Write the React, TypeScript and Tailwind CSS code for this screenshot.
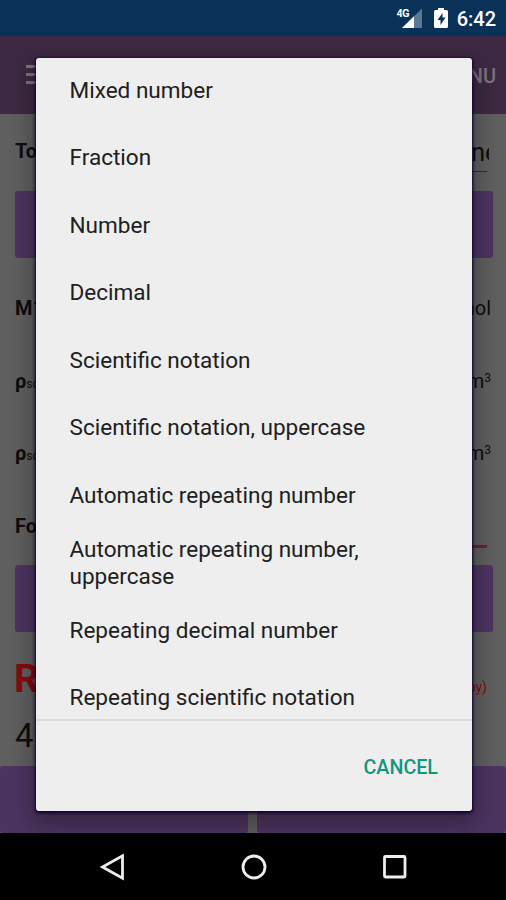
const formats = [
  'Mixed number',
  'Fraction',
  'Number',
  'Decimal',
  'Scientific notation',
  'Scientific notation, uppercase',
  'Automatic repeating number',
  'Automatic repeating number, uppercase',
  'Repeating decimal number',
  'Repeating scientific notation',
];

function StatusBar() {
  return (
    <header className="flex h-9 shrink-0 items-center justify-end bg-[#0a3158] pr-[10px] text-white">
      <svg className="h-6 w-[28px]" viewBox="0 0 28 24">
        <path d="M26 2.500V22H6Z" fill="#5b7894" />
        <path d="M18 10.300V22H6Z" fill="#fff" />
        <text x="0.500" y="11" fontSize="11" fontWeight="700" fill="#fff" stroke="#0a3158" strokeWidth="2" paintOrder="stroke" textLength="13">4G</text>
      </svg>
      <svg className="ml-[10px] h-6 w-[14px]" viewBox="0 0 14 24">
        <path d="M4 2h6v2h2.500q1.500 0 1.500 1.500v15q0 1.500-1.500 1.500h-11Q0 22 0 20.500v-15Q0 4 1.500 4H4Z" fill="#fff" />
        <path d="M8.500 7L3.500 14h3v5l5-7.500h-3Z" fill="#0a3158" />
      </svg>
      <span className="mt-[2px] ml-[9px] text-[20px] leading-9 font-medium">6:42</span>
    </header>
  );
}

function AppBar() {
  return (
    <div className="flex h-[78px] shrink-0 items-center justify-between bg-[#3d2942] pr-[10px] pl-[26px] text-[#7c7480]">
      <div className="-mt-[2px] flex w-6 flex-col gap-[5px]">
        <span className="h-[3px] bg-current" />
        <span className="h-[3px] bg-current" />
        <span className="h-[3px] bg-current" />
      </div>
      <span className="mt-[2px] text-[20px] font-medium">MENU</span>
    </div>
  );
}

function Field({ label, sub, unit, sup }: { label: string; sub?: string; unit: string; sup?: string }) {
  return (
    <div className="flex h-[72.500px] items-center justify-between px-[15px] text-[20px] text-[#0d0d0d]">
      <span className="font-bold">
        {label}
        {sub && <span className="text-[12px] font-normal">{sub}</span>}
      </span>
      <span>
        {unit}
        {sup && <span className="relative -top-[6px] text-[12px]">{sup}</span>}
      </span>
    </div>
  );
}

function Calculator() {
  return (
    <main className="flex h-[719px] flex-col overflow-hidden bg-[#5f5f5f] text-[#0d0d0d]">
      <div className="flex h-[77px] shrink-0 items-center justify-between pr-[17px] pl-[15px]">
        <span className="-mt-[3px] text-[20px] font-bold">To</span>
        <div className="h-[36px] w-[60px]">
          <div className="h-full overflow-hidden pl-[28px] text-[25px] leading-[36px]">one</div>
          <div className="mr-[2px] h-px bg-[#303030]" />
        </div>
      </div>
      <div className="mr-[13px] ml-[15px] h-[67px] shrink-0 rounded-[3px] bg-[#4c3460]" />
      <div className="mt-[14px] shrink-0">
        <Field label="M1" unit="g/mol" />
        <Field label="ρ" sub="solution" unit="g/cm" sup="3" />
        <Field label="ρ" sub="solute" unit="g/cm" sup="3" />
      </div>
      <div className="flex h-[75px] shrink-0 items-center justify-between pr-[19px] pl-[15px]">
        <span className="-mt-[2px] text-[20px] font-bold">Fo</span>
        <span className="mt-[38px] h-[3px] w-[60px] bg-[#6d2038]" />
      </div>
      <div className="mr-[13px] ml-[15px] h-[67px] shrink-0 rounded-[3px] bg-[#4c3460]" />
      <div className="flex h-[90px] shrink-0 items-center justify-between pr-[19px] pl-[14px] text-[#850a0f]">
        <span className="mt-[5px] text-[39px] font-bold">R</span>
        <span className="mt-[21px] text-[14px]">(by)</span>
      </div>
      <span className="pl-[15px] text-[33px] leading-[28px]">4</span>
      <div className="mt-auto flex h-[67px] shrink-0 gap-[9px]">
        <div className="w-[248px] rounded-[3px] bg-[#4c3460]" />
        <div className="flex-1 rounded-[3px] bg-[#4c3460]" />
      </div>
    </main>
  );
}

function FormatDialog() {
  return (
    <div className="absolute top-[58px] left-[36px] flex h-[753px] w-[436px] flex-col overflow-hidden rounded-[3px] bg-[#eeeeee] shadow-[0_1px_3px_1px_#0c0030,0_10px_22px_4px_#00000050]">
      <ul className="h-[661px] shrink-0 overflow-hidden">
        {formats.map((format, index) => (
          <li
            key={format}
            className={`flex h-[67.500px] items-center px-[33.500px] text-[22.550px] leading-[27px] text-[#202020] ${index === 0 ? '-mt-[1.500px]' : ''}`}
          >
            {format}
          </li>
        ))}
      </ul>
      <div className="flex flex-1 items-center justify-end border-t-2 border-[#dadada] pr-[34px]">
        <button className="mt-[3px] text-[19.700px] font-medium text-[#109682]">CANCEL</button>
      </div>
    </div>
  );
}

function NavigationBar() {
  return (
    <nav className="flex h-[67px] shrink-0 items-center justify-center gap-[113px] bg-black pl-px">
      <svg className="h-7 w-7" viewBox="0 0 28 28" fill="none" stroke="#eee" strokeWidth="2.8">
        <path d="M23.500 2.800V25.200L3.500 14Z" />
      </svg>
      <svg className="h-7 w-7" viewBox="0 0 28 28" fill="none" stroke="#eee" strokeWidth="2.8">
        <circle cx="14" cy="14" r="11" />
      </svg>
      <svg className="h-7 w-7" viewBox="0 0 28 28" fill="none" stroke="#eee" strokeWidth="2.8">
        <rect x="3.500" y="3.500" width="20.500" height="20.500" rx="1" />
      </svg>
    </nav>
  );
}

export default function App() {
  return (
    <div className="relative flex h-[900px] w-[506px] flex-col overflow-hidden bg-black font-[Roboto,sans-serif]">
      <StatusBar />
      <AppBar />
      <Calculator />
      <NavigationBar />
      <FormatDialog />
    </div>
  );
}
